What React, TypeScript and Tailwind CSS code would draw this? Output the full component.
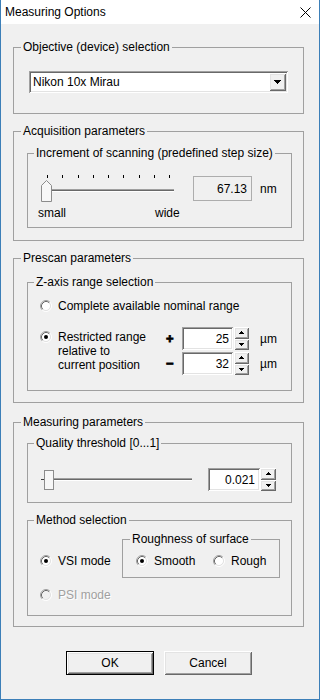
import type { ReactNode } from 'react';

const raised =
  'shadow-[inset_1px_1px_0_#fff,inset_-1px_-1px_0_#696969,inset_2px_2px_0_#e3e3e3,inset_-2px_-2px_0_#a0a0a0]';
const sunken =
  'shadow-[inset_1px_1px_0_#a0a0a0,inset_-1px_-1px_0_#fff,inset_2px_2px_0_#696969,inset_-2px_-2px_0_#e3e3e3]';

type GroupBoxProps = {
  title: string;
  className?: string;
  children: ReactNode;
};

function GroupBox({ title, className = '', children }: GroupBoxProps) {
  return (
    <fieldset className={`border border-[#a0a0a0] ${className}`}>
      <legend className="px-[2px]">{title}</legend>
      {children}
    </fieldset>
  );
}

function RadioMark({ checked, disabled }: { checked?: boolean; disabled?: boolean }) {
  return (
    <svg width="12" height="12" viewBox="0 0 12 12" className="shrink-0">
      <circle cx="6" cy="6" r="4" fill={disabled ? '#f0f0f0' : '#fff'} />
      <path d="M2.11 9.89A5.5 5.5 0 0 1 9.89 2.11" fill="none" stroke="#a0a0a0" />
      <path d="M9.89 2.11A5.5 5.5 0 0 1 2.11 9.89" fill="none" stroke="#fff" />
      <path d="M2.82 9.18A4.5 4.5 0 0 1 9.18 2.82" fill="none" stroke="#696969" />
      <path d="M9.18 2.82A4.5 4.5 0 0 1 2.82 9.18" fill="none" stroke="#e3e3e3" />
      {checked && <circle cx="6" cy="6" r="2" fill="#000" />}
    </svg>
  );
}

type RadioProps = {
  checked?: boolean;
  disabled?: boolean;
  className?: string;
  children: ReactNode;
};

function Radio({ checked, disabled, className = '', children }: RadioProps) {
  return (
    <div className={`flex items-start gap-[6px] ${className}`}>
      <span className="flex h-[14px] items-center">
        <RadioMark checked={checked} disabled={disabled} />
      </span>
      <span className={disabled ? 'text-[#a0a0a0] [text-shadow:1px_1px_0_#fff]' : ''}>{children}</span>
    </div>
  );
}

function SpinArrow({ up }: { up?: boolean }) {
  return (
    <svg width="5" height="3" viewBox="0 0 5 3">
      <path d={up ? 'M2 0h1v1h1v1h1v1H0V2h1V1h1z' : 'M0 0h5v1H4v1H3v1H2V2H1V1H0z'} fill="#000" />
    </svg>
  );
}

function Spinner({ className = '' }: { className?: string }) {
  return (
    <div className={`flex flex-col ${className}`}>
      <div className={`flex flex-1 items-center justify-center bg-[#f0f0f0] ${raised}`}>
        <SpinArrow up />
      </div>
      <div className={`flex flex-1 items-center justify-center bg-[#f0f0f0] ${raised}`}>
        <SpinArrow />
      </div>
    </div>
  );
}

function EditBox({ value, className = '' }: { value: string; className?: string }) {
  return <div className={`flex items-center justify-end bg-white ${sunken} ${className}`}>{value}</div>;
}

function SpinRow({ sign, value }: { sign: string; value: string }) {
  return (
    <div className="flex h-[23px] items-center">
      <span className="w-[16px] text-[13px] font-bold [-webkit-text-stroke:0.8px_#000]">{sign}</span>
      <EditBox value={value} className="h-full w-[51px] pr-[4px]" />
      <Spinner className="ml-[1px] h-full w-[15px]" />
      <span className="ml-[11px]">µm</span>
    </div>
  );
}

function StepSlider() {
  const ticks = [9, 24, 40, 55, 70, 85, 101, 116, 131];
  return (
    <svg width="142" height="31" viewBox="0 0 142 31">
      {ticks.map((x) => (
        <rect key={x} x={x} y="3" width="1" height="3" fill="#000" />
      ))}
      <rect x="9" y="17" width="127" height="1" fill="#a0a0a0" />
      <rect x="9" y="18" width="127" height="1" fill="#696969" />
      <rect x="9" y="19" width="127" height="1" fill="#fff" />
      <polygon points="3.5,13.5 8.5,8.5 13.5,13.5 13.5,29.5 3.5,29.5" fill="#f7f7f7" stroke="#8c8c8c" />
    </svg>
  );
}

function QualitySlider() {
  return (
    <svg width="155" height="23" viewBox="0 0 155 23" className="shrink-0">
      <rect x="1" y="11" width="3" height="1" fill="#404040" />
      <rect x="4" y="10" width="148" height="1" fill="#a0a0a0" />
      <rect x="4" y="11" width="148" height="1" fill="#696969" />
      <rect x="4" y="12" width="148" height="1" fill="#fff" />
      <rect x="4.5" y="2.5" width="9" height="19" fill="#f7f7f7" stroke="#8c8c8c" />
    </svg>
  );
}

function CloseIcon() {
  return (
    <svg width="11" height="11" viewBox="0 0 11 11">
      <path d="M0.5 0.5L10.5 10.5M10.5 0.5L0.5 10.5" stroke="#000" strokeWidth="1" fill="none" />
    </svg>
  );
}

export default function App() {
  return (
    <div className="flex h-[700px] w-[320px] flex-col border-x border-b border-[#3c7fb8] bg-[#f0f0f0] text-[12px] leading-[14px] text-black [font-family:'Liberation_Sans',Arial,sans-serif]">
      <div className="flex h-[24px] shrink-0 items-center justify-between bg-white pl-[4px] pr-[8px]">
        <span>Measuring Options</span>
        <CloseIcon />
      </div>

      <div className="flex flex-col pl-[12px] pr-[15px]">
        <GroupBox title="Objective (device) selection" className="mt-[16px] px-[7px] pb-[20px]">
          <div className={`ml-[8px] mt-[17px] flex h-[22px] w-[259px] bg-white p-[2px] ${sunken}`}>
            <span className="flex flex-1 items-center pl-[2px]">Nikon 10x Mirau</span>
            <span className={`flex w-[17px] items-center justify-center bg-[#f0f0f0] ${raised}`}>
              <svg width="7" height="4" viewBox="0 0 7 4">
                <path d="M0 0h7v1H6v1H5v1H4v1H3V3H2V2H1V1H0z" fill="#000" />
              </svg>
            </span>
          </div>
        </GroupBox>

        <GroupBox title="Acquisition parameters" className="mt-[10px] px-[7px] pb-[12px]">
          <GroupBox
            title="Increment of scanning (predefined step size)"
            className="ml-[6px] mt-[8px] w-[265px] px-[6px] pb-[7px]"
          >
            <div className="mt-[12px] flex items-start pl-[4px]">
              <div className="flex w-[142px] flex-col">
                <StepSlider />
                <div className="mt-[3px] flex">
                  <span className="w-[117px]">small</span>
                  <span>wide</span>
                </div>
              </div>
              <div className="ml-[13px] mt-[4px] flex items-center">
                <div className="flex h-[25px] w-[59px] items-center justify-end border border-[#adadad] pr-[4px]">
                  67.13
                </div>
                <span className="ml-[8px]">nm</span>
              </div>
            </div>
          </GroupBox>
        </GroupBox>

        <GroupBox title="Prescan parameters" className="mt-[10px] px-[7px] pb-[11px]">
          <GroupBox title="Z-axis range selection" className="ml-[6px] mt-[10px] w-[265px] px-[6px] pb-[15px]">
            <Radio className="ml-[6px] mt-[10px]">Complete available nominal range</Radio>
            <div className="ml-[6px] mt-[14px] flex items-start">
              <Radio checked className="mt-[3px] w-[126px] shrink-0">
                Restricted range
                <br />
                relative to
                <br />
                current position
              </Radio>
              <div className="flex flex-col gap-[2px]">
                <SpinRow sign="+" value="25" />
                <SpinRow sign="−" value="32" />
              </div>
            </div>
          </GroupBox>
        </GroupBox>

        <GroupBox title="Measuring parameters" className="mt-[12px] px-[7px] pb-[10px]">
          <GroupBox title="Quality threshold [0...1]" className="ml-[6px] mt-[7px] w-[265px] px-[6px] pb-[11px]">
            <div className="ml-[6px] mt-[18px] flex h-[23px] items-center">
              <QualitySlider />
              <EditBox value="0.021" className="ml-[13px] h-full w-[52px] pr-[5px]" />
              <Spinner className="h-full w-[16px]" />
            </div>
          </GroupBox>

          <GroupBox title="Method selection" className="ml-[6px] mt-[10px] w-[265px] px-[6px] pb-[13px]">
            <div className="flex items-start">
              <Radio checked className="ml-[6px] mt-[27px] w-[82px] shrink-0">
                VSI mode
              </Radio>
              <GroupBox title="Roughness of surface" className="mt-[5px] w-[158px] px-[7px] pb-[9px]">
                <div className="mt-[8px] flex pl-[6px]">
                  <Radio checked className="w-[77px]">
                    Smooth
                  </Radio>
                  <Radio>Rough</Radio>
                </div>
              </GroupBox>
            </div>
            <Radio disabled className="ml-[6px] mt-[10px]">
              PSI mode
            </Radio>
          </GroupBox>
        </GroupBox>

        <div className="mt-[24px] flex justify-center gap-[10px] pl-[1px]">
          <button className={`h-[24px] w-[88px] border border-black bg-[#f0f0f0] ${raised}`}>OK</button>
          <button className={`h-[24px] w-[88px] bg-[#f0f0f0] ${raised}`}>Cancel</button>
        </div>
      </div>
    </div>
  );
}
